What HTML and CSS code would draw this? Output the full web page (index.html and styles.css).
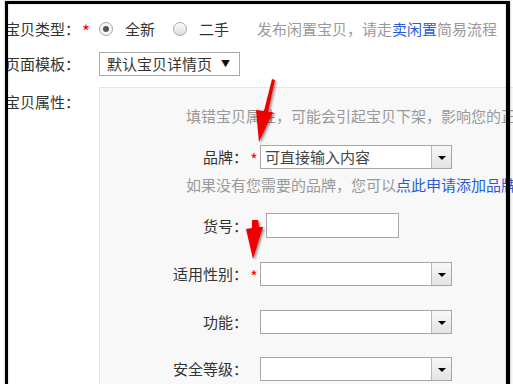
FILE: index.html
```html
<!DOCTYPE html>
<html lang="zh-CN">
<head>
    <meta charset="UTF-8">
    <meta name="viewport" content="width=device-width, initial-scale=1.0">
    <title>发布宝贝</title>
    <link rel="stylesheet" href="styles.css">
</head>
<body>
    <div class="page">
        <div class="row type-row">
            <span class="label">宝贝类型：</span>
            <span class="req">*</span>
            <label class="radio"><span class="dot checked"></span>全新</label>
            <label class="radio"><span class="dot"></span>二手</label>
            <span class="tip">发布闲置宝贝，请走<a href="#">卖闲置</a>简易流程</span>
        </div>
        <div class="row tpl-row">
            <span class="label wide">页面模板：</span>
            <div class="select">
                <span>默认宝贝详情页</span>
                <span class="caret">▼</span>
            </div>
        </div>
        <div class="row attr-row">
            <span class="label wide attr-label">宝贝属性：</span>
            <div class="panel">
                <p class="hint first">填错宝贝属性，可能会引起宝贝下架，影响您的正常销售</p>
                <div class="field brand">
                    <span class="flabel">品牌：</span>
                    <span class="star">*</span>
                    <div class="combo"><span class="ph">可直接输入内容</span><span class="btn"><i></i></span></div>
                </div>
                <p class="hint second">如果没有您需要的品牌，您可以<a href="#">点此申请添加品牌</a></p>
                <div class="field sku">
                    <span class="flabel">货号：</span>
                    <span class="star"></span>
                    <div class="text-input"></div>
                </div>
                <div class="field gap">
                    <span class="flabel">适用性别：</span>
                    <span class="star">*</span>
                    <div class="combo"><span class="ph"></span><span class="btn"><i></i></span></div>
                </div>
                <div class="field gap">
                    <span class="flabel">功能：</span>
                    <span class="star"></span>
                    <div class="combo"><span class="ph"></span><span class="btn"><i></i></span></div>
                </div>
                <div class="field gap last">
                    <span class="flabel">安全等级：</span>
                    <span class="star"></span>
                    <div class="combo"><span class="ph"></span><span class="btn"><i></i></span></div>
                </div>
            </div>
        </div>

        <svg class="arrows" width="513" height="384" viewBox="0 0 513 384">
            <defs>
                <filter id="shade" x="-50%" y="-50%" width="200%" height="200%">
                    <feDropShadow dx="1.5" dy="1.5" stdDeviation="1.2" flood-color="#000" flood-opacity="0.45"/>
                </filter>
            </defs>
            <g fill="#ee0000" filter="url(#shade)">
                <polygon points="272,79 275,80 268,112 273,112 259,142 256,110 264,111"/>
                <polygon points="252,220 258,220 259,227 263,227 253,259 246,229 252,228"/>
            </g>
        </svg>
    </div>
</body>
</html>
```

FILE: styles.css
```css
* {
    box-sizing: border-box;
}
body {
    margin: 0;
    background: #fff;
    font-family: "Noto Sans CJK SC", "Microsoft YaHei", sans-serif;
    font-size: 15px;
    color: #333;
    overflow: hidden;
}
a {
    color: #2a5bd7;
    text-decoration: none;
}
.page {
    position: relative;
    height: 384px;
    padding: 17px 0 0 5px;
    overflow: hidden;
}
/* screenshot frame */
.page::after {
    content: '';
    position: absolute;
    top: 1px;
    left: 5px;
    right: 3px;
    bottom: -10px;
    border: 3px solid #000;
    border-right-width: 4px;
    border-bottom: none;
    box-shadow: 0 0 2px rgba(0, 0, 0, 0.35), inset 0 0 2px rgba(0, 0, 0, 0.25);
    pointer-events: none;
    z-index: 5;
}
.row {
    display: flex;
    align-items: center;
    line-height: 24px;
}
.label {
    width: 77px;
    flex-shrink: 0;
    white-space: nowrap;
}
.label.wide {
    width: 94px;
}
.req {
    width: 17px;
    color: #f00;
    font-size: 17px;
    line-height: 20px;
    padding-top: 3px;
}
.radio {
    display: flex;
    align-items: center;
    margin-right: 18px;
}
.dot {
    width: 14px;
    height: 14px;
    border-radius: 50%;
    border: 1px solid #a8a8a8;
    background: linear-gradient(#fdfdfd, #dcdcdc);
    margin-right: 12px;
    position: relative;
}
.dot.checked {
    background: #f4f4f4;
}
.dot.checked::before {
    content: '';
    position: absolute;
    left: 3px;
    top: 3px;
    width: 6px;
    height: 6px;
    border-radius: 50%;
    background: #555;
}
.tip {
    margin-left: 10px;
    color: #999;
    white-space: nowrap;
}
.tpl-row {
    margin-top: 11px;
}
.select {
    display: flex;
    justify-content: space-between;
    align-items: center;
    width: 141px;
    height: 24px;
    border: 1px solid #a9a9a9;
    padding: 0 9px 0 7px;
    background: #fff;
}
.caret {
    font-size: 9px;
    color: #111;
}
.attr-row {
    margin-top: 11px;
    align-items: flex-start;
}
.attr-label {
    padding-top: 3px;
}
.panel {
    flex: 1;
    height: 320px;
    margin-right: -20px;
    background: #f8f8f8;
    border: 1px solid #e6e6e6;
    padding-top: 18px;
}
.hint {
    margin: 0;
    padding-left: 86px;
    color: #999;
    line-height: 20px;
    white-space: nowrap;
}
.hint.second {
    margin-top: 6px;
}
.field {
    display: flex;
    align-items: center;
    height: 24px;
}
.field.brand {
    margin-top: 19px;
}
.field.sku {
    margin-top: 18px;
    height: 25px;
}
.field.gap {
    margin-top: 24px;
}
.field.last {
    margin-top: 23px;
}
.flabel {
    width: 148px;
    text-align: right;
    white-space: nowrap;
}
.star {
    width: 12px;
    color: #f00;
    font-size: 16px;
    line-height: 20px;
    padding-top: 4px;
    text-align: center;
}
.combo {
    display: flex;
    width: 192px;
    height: 24px;
    border: 1px solid #a6a6a6;
    background: #fff;
}
.ph {
    flex: 1;
    padding-left: 4px;
    line-height: 22px;
    color: #444;
}
.btn {
    width: 20px;
    border-left: 1px solid #b8b8b8;
    background: linear-gradient(#f7f7f7, #e4e4e4);
    display: flex;
    align-items: center;
    justify-content: center;
}
.btn i {
    width: 0;
    height: 0;
    border-left: 4px solid transparent;
    border-right: 4px solid transparent;
    border-top: 4px solid #000;
    margin-top: 2px;
}
.text-input {
    width: 133px;
    height: 25px;
    margin-left: 6px;
    border: 1px solid #a6a6a6;
    background: #fff;
}
.arrows {
    position: absolute;
    left: 0;
    top: 0;
    z-index: 4;
    pointer-events: none;
}
```
